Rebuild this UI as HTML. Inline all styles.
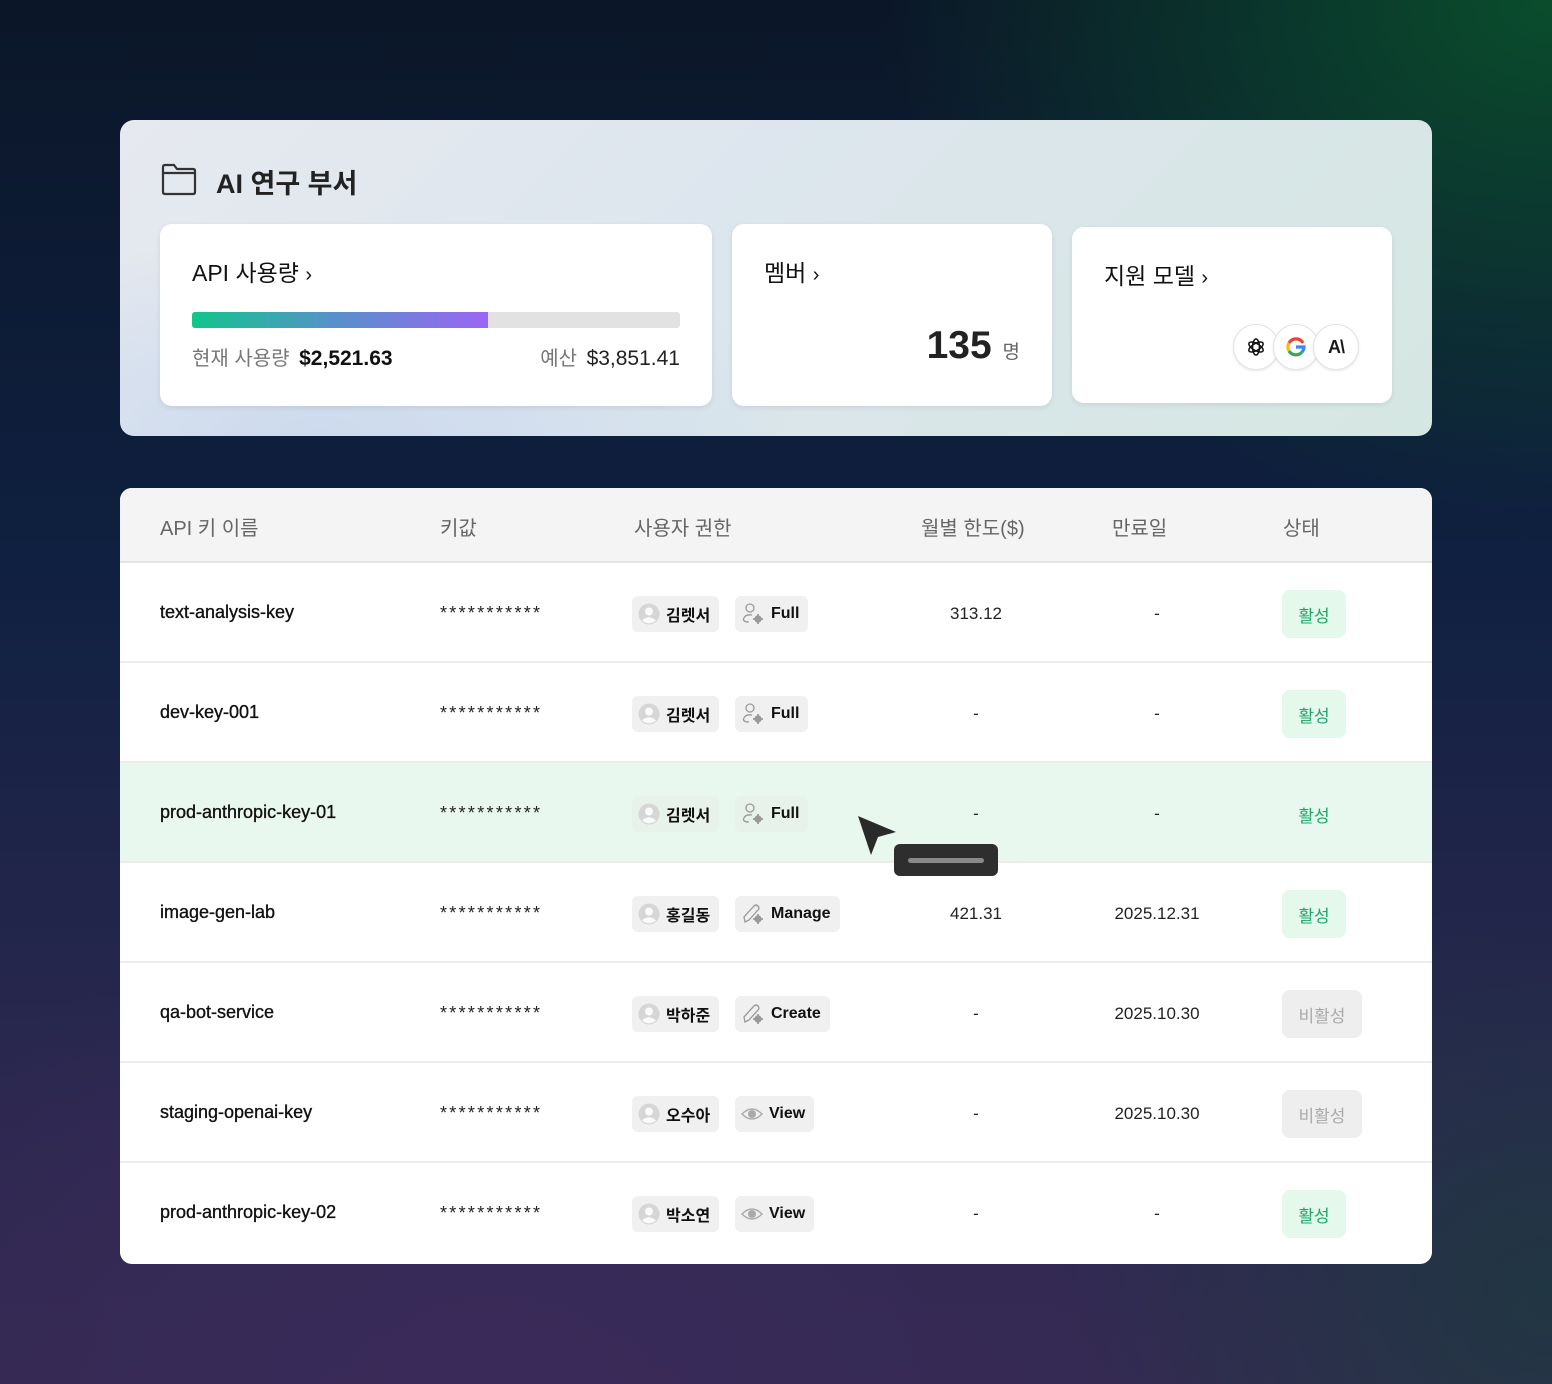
<!DOCTYPE html>
<html><head><meta charset="utf-8"><style>
*{margin:0;padding:0;box-sizing:border-box}
body{width:1552px;height:1384px;overflow:hidden;position:relative;font-family:"Liberation Sans","Noto Sans CJK KR",sans-serif;color:#1a1a1a;
background:
radial-gradient(ellipse 900px 700px at 1552px 0px,rgba(10,80,45,0.95),rgba(10,80,45,0) 75%),
radial-gradient(ellipse 900px 600px at 500px 1384px,rgba(58,42,90,1),rgba(58,42,90,0) 80%),
radial-gradient(ellipse 600px 500px at 1552px 1300px,rgba(25,60,60,0.7),rgba(25,60,60,0) 80%),
linear-gradient(180deg,#0b1628 0%,#0f2040 40%,#2c2850 80%,#342a52 100%);}
.abs{position:absolute}
.panel{left:120px;top:120px;width:1312px;height:316px;border-radius:14px;
background:linear-gradient(135deg,#e6e9ef 0%,#dde6ee 40%,#d5e7e2 100%);}
.panel:after{content:"";position:absolute;inset:0;border-radius:14px;background:radial-gradient(ellipse 500px 200px at 200px 316px,rgba(200,215,238,0.8),rgba(200,215,238,0))}
.card{background:#fff;border-radius:12px;box-shadow:0 2px 6px rgba(0,0,0,0.08);z-index:2}
.ct{font-size:23px;color:#111;font-family:"Liberation Sans","Noto Sans CJK KR",sans-serif}
.table{left:120px;top:488px;width:1312px;height:776px;background:#fff;border-radius:12px;overflow:hidden}
.th{top:0;height:75px;width:100%;background:#f4f4f4;border-bottom:2px solid #e4e4e4}
.th span{position:absolute;top:24px;font-size:20px;color:#666}
.row{left:0;width:100%;height:100px;border-bottom:2px solid #ececec}
.row > *{position:absolute}
.nm{left:40px;top:39px;font-size:18px;color:#111;-webkit-text-stroke:0.35px #111}
.key{left:320px;top:40px;font-size:18px;letter-spacing:2.3px;color:#222}
.pill{top:33px;height:36px;background:#f0f0f0;border-radius:6px;display:flex;align-items:center;padding:0 9px 0 6px;font-size:16px;font-weight:bold;color:#111}
.pill svg{margin-right:6px}
.num{top:41px;font-size:17px;color:#222;transform:translateX(-50%)}
.st{top:27px;height:48px;border-radius:8px;display:flex;align-items:center;justify-content:center;font-size:17px}
.on{left:1162px;width:64px;background:#e4f8ec;color:#1ea56a}
.off{left:1162px;width:80px;background:#eeeeee;color:#aaa}
</style></head><body>
<div class="abs panel"></div>
<svg class="abs" style="left:160px;top:162px;z-index:2" width="38" height="34" viewBox="0 0 38 34"><path d="M3 5 Q3 3 5 3 H14 L17 7 H33 Q35 7 35 9 V30 Q35 32 33 32 H5 Q3 32 3 30 Z M3 11 H35" fill="none" stroke="#333" stroke-width="2.2" stroke-linejoin="round"/></svg>
<div class="abs" style="left:216px;top:162px;font-size:27px;font-weight:bold;color:#222;z-index:2">AI 연구 부서</div>

<div class="abs card" style="left:160px;top:224px;width:552px;height:182px">
 <div class="abs ct" style="left:32px;top:30px">API 사용량 <span style="font-size:20px">›</span></div>
 <div class="abs" style="left:32px;top:88px;width:488px;height:16px;background:#e2e2e2;border-radius:3px;overflow:hidden"><div style="width:296px;height:100%;background:linear-gradient(90deg,#10c68a,#5a8fcc,#9b66f5)"></div></div>
 <div class="abs" style="left:32px;top:118px;font-size:20px;color:#777">현재 사용량 <b style="color:#111;font-size:21px;margin-left:4px">$2,521.63</b></div>
 <div class="abs" style="right:32px;top:118px;font-size:20px;color:#777">예산 <span style="color:#222;font-size:21px;margin-left:4px">$3,851.41</span></div>
</div>
<div class="abs card" style="left:732px;top:224px;width:320px;height:182px">
 <div class="abs ct" style="left:32px;top:30px">멤버 <span style="font-size:20px">›</span></div>
 <div class="abs" style="right:32px;top:100px;font-size:39px;font-weight:bold;color:#222">135 <span style="font-size:19px;font-weight:normal;color:#666">명</span></div>
</div>
<div class="abs card" style="left:1072px;top:227px;width:320px;height:176px">
 <div class="abs ct" style="left:32px;top:30px">지원 모델 <span style="font-size:20px">›</span></div>
</div>
<div class="abs" style="left:1233px;top:324px;width:46px;height:46px;border-radius:50%;background:#fff;border:1px solid #e4e4e4;box-shadow:0 1px 3px rgba(0,0,0,.1);z-index:3;display:flex;align-items:center;justify-content:center">
<svg width="20" height="20" viewBox="0 0 20 20"><g fill="none" stroke="#111" stroke-width="1.5"><ellipse cx="10" cy="10" rx="3.5" ry="8"/><ellipse cx="10" cy="10" rx="3.5" ry="8" transform="rotate(60 10 10)"/><ellipse cx="10" cy="10" rx="3.5" ry="8" transform="rotate(120 10 10)"/></g></svg></div>
<div class="abs" style="left:1273px;top:324px;width:46px;height:46px;border-radius:50%;background:#fff;border:1px solid #e4e4e4;box-shadow:0 1px 3px rgba(0,0,0,.1);z-index:4;display:flex;align-items:center;justify-content:center">
<svg width="20" height="20" viewBox="0 0 20 20"><path d="M17 6 A8 8 0 0 0 3 6" stroke="#ea4335" stroke-width="3.2" fill="none"/><path d="M3 6 A8 8 0 0 0 3 14" stroke="#fbbc05" stroke-width="3.2" fill="none"/><path d="M3 14 A8 8 0 0 0 15.5 15.5" stroke="#34a853" stroke-width="3.2" fill="none"/><path d="M15.5 15.5 A8 8 0 0 0 18 10 H10" stroke="#4285f4" stroke-width="3.2" fill="none"/></svg></div>
<div class="abs" style="left:1313px;top:324px;width:46px;height:46px;border-radius:50%;background:#fff;border:1px solid #e4e4e4;box-shadow:0 1px 3px rgba(0,0,0,.1);z-index:5;display:flex;align-items:center;justify-content:center;font-weight:bold;font-size:18px;letter-spacing:-1px">A\</div>

<div class="abs table">
 <div class="abs th"><span style="left:40px">API 키 이름</span><span style="left:320px">키값</span><span style="left:514px">사용자 권한</span><span style="left:801px">월별 한도($)</span><span style="left:992px">만료일</span><span style="left:1163px">상태</span></div>
</div>
<div id="rows"></div>
<div class="abs" style="left:894px;top:844px;width:104px;height:32px;background:#2e2e2e;border-radius:6px;z-index:20"><div style="position:absolute;left:14px;top:14px;width:76px;height:5px;border-radius:3px;background:#8a8a8a"></div></div>
<svg class="abs" style="left:856px;top:814px;z-index:21" width="42" height="44" viewBox="0 0 42 44"><path d="M2 2 L40 18 L22 23 L15 41 Z" fill="#2a2a2a"/></svg>
<script>
var U='<svg width="22" height="22" viewBox="0 0 22 22"><circle cx="11" cy="11" r="10.5" fill="#d6d6d6"/><circle cx="11" cy="8.5" r="4" fill="#fafafa"/><path d="M4 17.5 Q11 11 18 17.5 Q11 23 4 17.5Z" fill="#fafafa"/></svg>';
var F='<svg width="24" height="24" viewBox="0 0 24 24" fill="none" stroke="#999" stroke-width="1.3"><circle cx="9" cy="6" r="4"/><path d="M11 13 Q4 12 2.5 17 Q2 20 8 20"/><circle cx="17" cy="17" r="3" fill="#999"/><path d="M17 12v2M17 20v2M12 17h2M20 17h2" stroke-width="1.8"/></svg>';
var M='<svg width="24" height="24" viewBox="0 0 24 24" fill="none" stroke="#999" stroke-width="1.3"><path d="M4 20 L3 15 L13 4 Q15 2 17 4 Q19 6 17 8 L8 18 Z"/><circle cx="17" cy="17" r="3" fill="#999"/><path d="M17 12v2M17 20v2M12 17h2M20 17h2" stroke-width="1.8"/></svg>';
var V='<svg width="22" height="22" viewBox="0 0 22 22"><path d="M1 11 Q11 1 21 11 Q11 21 1 11Z" fill="none" stroke="#aaa" stroke-width="1.4"/><circle cx="11" cy="11" r="4" fill="#aaa"/></svg>';
var d=[["text-analysis-key","김렛서",F,"Full","313.12","-",1],["dev-key-001","김렛서",F,"Full","-","-",1],["prod-anthropic-key-01","김렛서",F,"Full","-","-",1],["image-gen-lab","홍길동",M,"Manage","421.31","2025.12.31",1],["qa-bot-service","박하준",M,"Create","-","2025.10.30",0],["staging-openai-key","오수아",V,"View","-","2025.10.30",0],["prod-anthropic-key-02","박소연",V,"View","-","-",1]];
var h='';
d.forEach(function(r,i){
 var top=563+i*100, hl=i==2;
 h+='<div class="abs row" style="left:120px;width:1312px;top:'+top+'px;'+(hl?'background:#e8f8ee;':'background:#fff;')+(i==6?'border-bottom:none;height:100px;border-radius:0 0 12px 12px;':'')+'">'+
 '<div class="nm">'+r[0]+'</div><div class="key">***********</div>'+
 '<div class="pill" style="left:512px;'+(hl?'background:#e6f2ea;':'')+'">'+U+r[1]+'</div>'+
 '<div class="pill" style="left:615px;'+(hl?'background:#e6f2ea;':'')+'">'+r[2]+r[3]+'</div>'+
 '<div class="num" style="left:856px">'+r[4]+'</div><div class="num" style="left:1037px">'+r[5]+'</div>'+
 '<div class="st '+(r[6]?'on':'off')+'" style="'+(hl?'background:transparent;':'')+'">'+(r[6]?'활성':'비활성')+'</div></div>';
});
document.getElementById('rows').innerHTML=h;
</script>
</body></html>
